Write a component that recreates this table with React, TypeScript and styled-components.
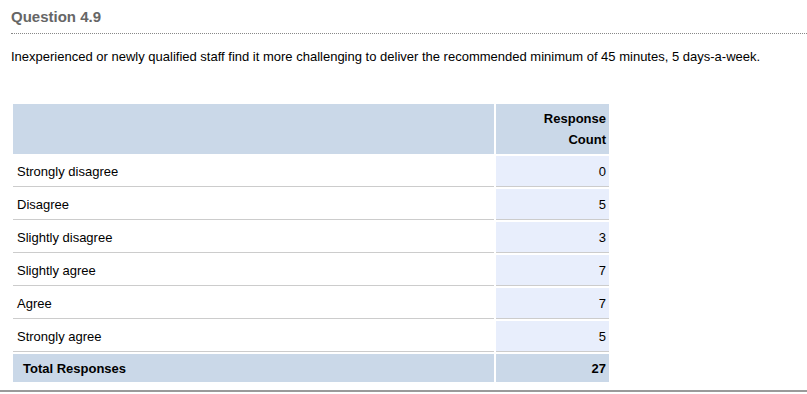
import React from "react";
import styled, { createGlobalStyle } from "styled-components";

const Global = createGlobalStyle`
  html, body { margin: 0; padding: 0; background: #fff; }
  body { font-family: "Liberation Sans", Arial, sans-serif; color: #000; }
`;

const Page = styled.div`
  width: 807px;
  padding-top: 8px;
  border-bottom: 2px solid #9a9a9a;
  padding-bottom: 6px;
`;

const Title = styled.h2`
  margin: 0 0 0 11px;
  font-size: 15px;
  line-height: 18px;
  font-weight: bold;
  color: #666;
  padding-bottom: 7px;
  border-bottom: 1px dotted #888;
`;

const Prompt = styled.p`
  margin: 15px 0 0 11px;
  font-size: 13px;
  line-height: 16px;
`;

const Table = styled.table`
  margin: 37px 0 0 11px;
  width: 600px;
  border-collapse: separate;
  border-spacing: 2px;
  font-size: 13px;
`;

const HeadCell = styled.th<{ $right?: boolean }>`
  background: #cad8e8;
  height: 50px;
  padding: 0 3px 0 4px;
  text-align: ${(p) => (p.$right ? "right" : "left")};
  font-weight: bold;
  line-height: 21px;
  vertical-align: middle;
`;

const LabelCell = styled.td`
  height: 30px;
  padding: 0 0 0 4px;
  border-bottom: 1px solid #cccccc;
  vertical-align: middle;
`;

const CountCell = styled.td`
  height: 30px;
  width: 113px;
  padding: 0 3px 0 0;
  background: #e8eefc;
  border-bottom: 1px solid #cccccc;
  text-align: right;
  vertical-align: middle;
  box-sizing: border-box;
`;

const TotalCell = styled.td<{ $right?: boolean }>`
  height: 28px;
  background: #cad8e8;
  font-weight: bold;
  padding: ${(p) => (p.$right ? "0 3px 0 0" : "0 0 0 10px")};
  text-align: ${(p) => (p.$right ? "right" : "left")};
  vertical-align: middle;
`;

const rows: [string, number][] = [
  ["Strongly disagree", 0],
  ["Disagree", 5],
  ["Slightly disagree", 3],
  ["Slightly agree", 7],
  ["Agree", 7],
  ["Strongly agree", 5],
];

export default function App() {
  return (
    <>
      <Global />
      <Page>
        <Title>Question 4.9</Title>
        <Prompt>
          Inexperienced or newly qualified staff find it more challenging to deliver the recommended minimum of 45 minutes, 5 days-a-week.
        </Prompt>
        <Table>
          <thead>
            <tr>
              <HeadCell />
              <HeadCell $right>
                Response
                <br />
                Count
              </HeadCell>
            </tr>
          </thead>
          <tbody>
            {rows.map(([label, n]) => (
              <tr key={label}>
                <LabelCell>{label}</LabelCell>
                <CountCell>{n}</CountCell>
              </tr>
            ))}
            <tr>
              <TotalCell>Total Responses</TotalCell>
              <TotalCell $right>27</TotalCell>
            </tr>
          </tbody>
        </Table>
      </Page>
    </>
  );
}
